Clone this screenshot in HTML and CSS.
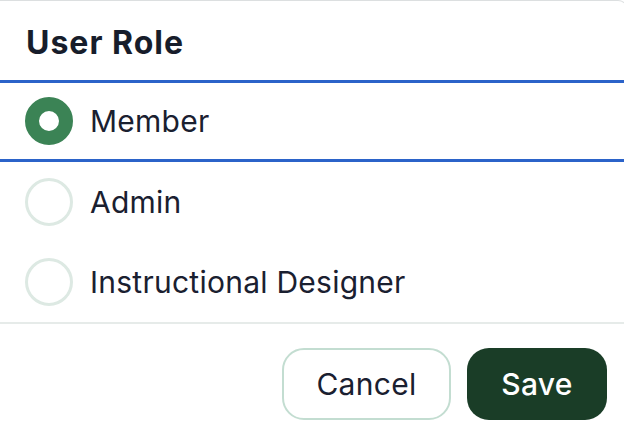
FILE: index.html
```html
<!DOCTYPE html>
<html>
<head>
<meta charset="utf-8">
<link rel="stylesheet" href="styles.css">
</head>
<body>
<div class="card">
  <div class="header"><h2 class="title">User Role</h2></div>
  <div class="options">
    <div class="option selected"><span class="radio on"></span><span class="label">Member</span></div>
    <div class="option"><span class="radio"></span><span class="label">Admin</span></div>
    <div class="option"><span class="radio"></span><span class="label">Instructional Designer</span></div>
  </div>
  <div class="footer">
    <button class="btn cancel">Cancel</button>
    <button class="btn save">Save</button>
  </div>
</div>
</body>
</html>
```
FILE: styles.css
```css
html, body { margin: 0; padding: 0; background: #fff; }
body { font-family: Inter, "Noto Sans", sans-serif; color: #1a202c; width: 624px; height: 446px; overflow: hidden; }
.card { border-top: 1px solid #dcdfe0; border-right: 1px solid #e6e8e9; border-top-right-radius: 10px; width: 628px; box-sizing: border-box; }
.header { height: 79px; display: flex; align-items: center; padding-left: 26px; }
.title { margin: 0; font-size: 32px; font-weight: 700; letter-spacing: 1px; color: #171d2b; padding-top: 3px; }
.options { display: flex; flex-direction: column; }
.option { height: 80px; display: flex; align-items: center; padding-left: 25px; gap: 17px; box-sizing: border-box; }
.option.selected { height: 82px; border-top: 3px solid #2b63c9; border-bottom: 3px solid #2b63c9; }
.radio { width: 48px; height: 48px; border-radius: 50%; border: 3px solid #dde9e3; box-sizing: border-box; flex: none; background: #fff; }
.radio.on { border: 14px solid #3b8355; }
.label { font-size: 30px; letter-spacing: 0.25px; color: #1a2030; }
.footer { border-top: 2px solid #e6ebe9; display: flex; justify-content: flex-end; gap: 16px; padding: 24px 20px 0 0; }
.btn { font-family: Inter, "Noto Sans", sans-serif; font-size: 30px; letter-spacing: 0.3px; height: 72px; border-radius: 22px; cursor: pointer; padding: 0; }
.cancel { width: 169px; background: #fff; border: 2px solid #c3ddd1; color: #1a2030; }
.save { width: 140px; background: #1a3d27; border: none; color: #fff; font-weight: 500; }
```
